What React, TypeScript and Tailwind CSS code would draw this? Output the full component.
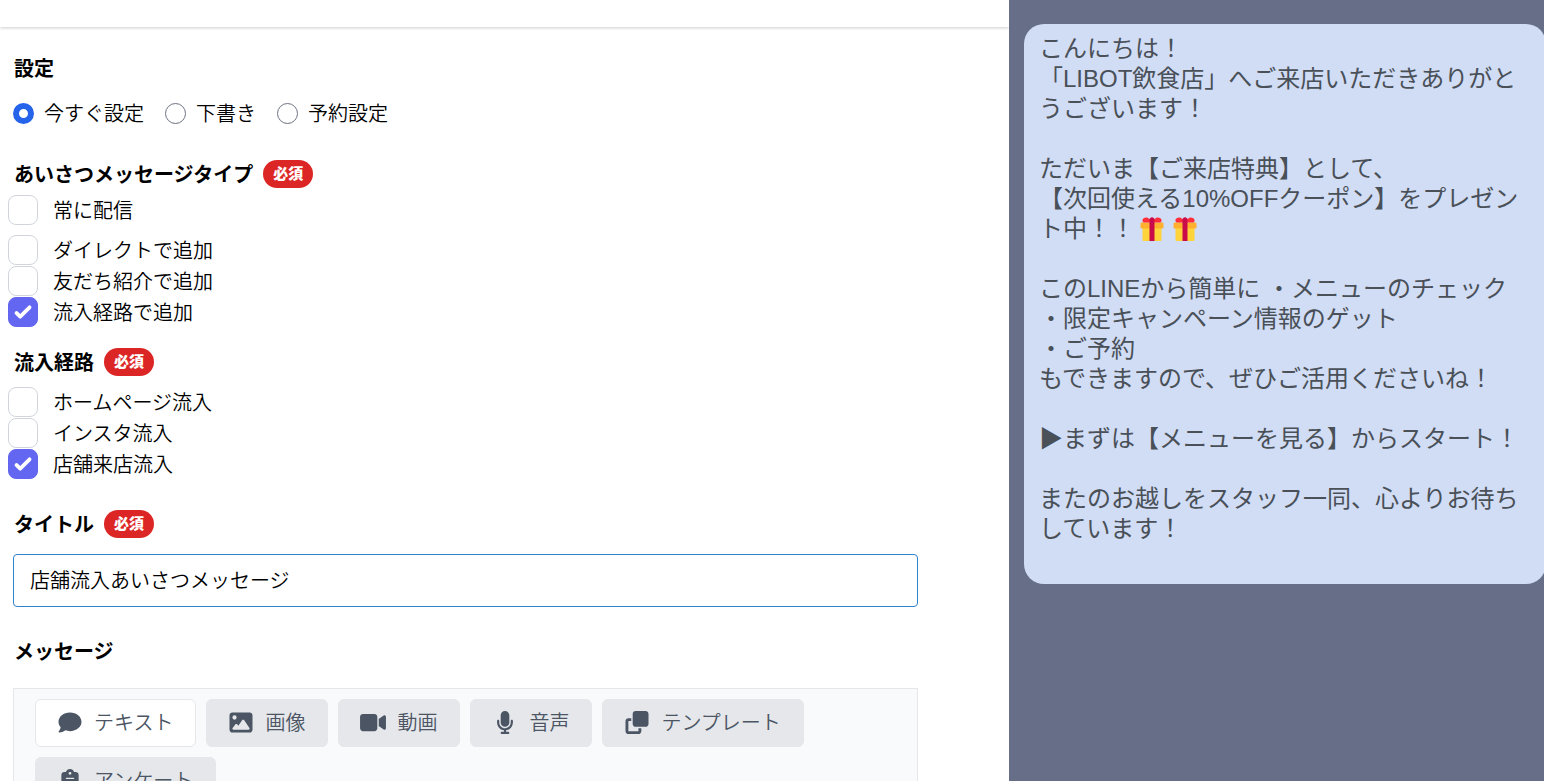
import { useState } from "react";
import type { ReactNode } from "react";
import {
  FaClipboard,
  FaClone,
  FaComment,
  FaImage,
  FaMicrophone,
  FaVideo,
} from "react-icons/fa6";

const GREETING_START = `こんにちは！
「LIBOT飲食店」へご来店いただきありがとうございます！

ただいま【ご来店特典】として、
【次回使える10%OFFクーポン】をプレゼント中！！`;

const GREETING_END = `

このLINEから簡単に ・メニューのチェック
・限定キャンペーン情報のゲット
・ご予約
もできますので、ぜひご活用くださいね！

▶まずは【メニューを見る】からスタート！

またのお越しをスタッフ一同、心よりお待ちしています！
`;

const TABS = [
  { label: "テキスト", Icon: FaComment },
  { label: "画像", Icon: FaImage },
  { label: "動画", Icon: FaVideo },
  { label: "音声", Icon: FaMicrophone },
  { label: "テンプレート", Icon: FaClone },
  { label: "アンケート", Icon: FaClipboard },
];

function Gift() {
  return (
    <svg viewBox="0 0 26 26" className="ml-1 inline-block size-[26px] align-[-5px]" role="img" aria-label="プレゼント">
      <rect x="3.5" y="9" width="19" height="16" rx="1" fill="#ffd43b" />
      <rect x="1.5" y="6.5" width="23" height="6" rx="1.2" fill="#ffb02e" />
      <path d="M13 6.5H4.5C3 5.5 3 3.5 4.6 2.3 6.5 .9 9 1.2 10.5 3L13 4l2.500-1c1.500-1.800 4-2.100 5.900-.7 1.600 1.200 1.600 3.200 .1 4.200z" fill="#ff2e3a" />
      <path d="M10.500 4c0-3.600 5-3.600 5 0V25h-5z" fill="#ca0b4a" />
    </svg>
  );
}

function Required() {
  return (
    <span className="rounded-full bg-[#dc2626] px-2.5 pt-0.5 pb-1 text-[15px] leading-[22px] font-black text-white">
      必須
    </span>
  );
}

function Heading({ children, required }: { children: ReactNode; required?: boolean }) {
  return (
    <span className="flex h-7 items-center gap-2.5 pl-3.5 text-xl font-bold">
      {children}
      {required && <Required />}
    </span>
  );
}

function Radio({ label, defaultChecked }: { label: string; defaultChecked?: boolean }) {
  return (
    <label className="flex items-center gap-2.5">
      <input
        type="radio"
        name="timing"
        defaultChecked={defaultChecked}
        className="size-[21px] appearance-none rounded-full border border-[#6b7280] bg-white checked:border-[6px] checked:border-[#2563eb]"
      />
      {label}
    </label>
  );
}

function Check({ label, defaultChecked }: { label: string; defaultChecked?: boolean }) {
  return (
    <label className="flex items-center gap-[15px]">
      <span className="grid size-[30px]">
        <input
          type="checkbox"
          defaultChecked={defaultChecked}
          className="peer col-start-1 row-start-1 size-[30px] appearance-none rounded-lg border border-[#d1d5db] bg-white checked:border-[#6366f1] checked:bg-[#6366f1]"
        />
        <svg
          viewBox="0 0 16 16"
          className="pointer-events-none col-start-1 row-start-1 hidden size-[30px] fill-white peer-checked:block"
          aria-hidden="true"
        >
          <path d="M12.207 4.793a1 1 0 010 1.414l-5 5a1 1 0 01-1.414 0l-2-2a1 1 0 011.414-1.414L6.5 9.086l4.293-4.293a1 1 0 011.414 0z" />
        </svg>
      </span>
      {label}
    </label>
  );
}

export default function App() {
  const [active, setActive] = useState("テキスト");

  return (
    <div
      lang="ja"
      className="flex h-screen overflow-hidden bg-white font-['Noto_Sans_CJK_JP',sans-serif] text-xl leading-[30px] text-black"
    >
      <main className="min-w-0 flex-1 font-[350]">
        <header className="h-[27px] bg-white shadow-[0_1px_3px_rgba(0,0,0,0.2)]" />
        <form className="pt-[27px]">
          <fieldset>
            <legend>
              <Heading>設定</Heading>
            </legend>
            <div className="mt-4 flex gap-[21px] pl-[13px]">
              <Radio label="今すぐ設定" defaultChecked />
              <Radio label="下書き" />
              <Radio label="予約設定" />
            </div>
          </fieldset>

          <fieldset className="mt-8">
            <legend>
              <Heading required>あいさつメッセージタイプ</Heading>
            </legend>
            <div className="mt-[7px] flex flex-col pl-2">
              <Check label="常に配信" />
              <div className="mt-2.5 flex flex-col gap-px">
                <Check label="ダイレクトで追加" />
                <Check label="友だち紹介で追加" />
                <Check label="流入経路で追加" defaultChecked />
              </div>
            </div>
          </fieldset>

          <fieldset className="mt-[21px]">
            <legend>
              <Heading required>流入経路</Heading>
            </legend>
            <div className="mt-[11px] flex flex-col gap-px pl-2">
              <Check label="ホームページ流入" />
              <Check label="インスタ流入" />
              <Check label="店舗来店流入" defaultChecked />
            </div>
          </fieldset>

          <div className="mt-[31px]">
            <label htmlFor="title">
              <Heading required>タイトル</Heading>
            </label>
            <div className="mt-4 pr-[91px] pl-[13px]">
              <input
                id="title"
                type="text"
                defaultValue="店舗流入あいさつメッセージ"
                className="block h-[53px] w-full rounded border border-[#3182ce] px-4 pb-0.5 outline-none"
              />
            </div>
          </div>

          <section className="mt-[30px]">
            <h2>
              <Heading>メッセージ</Heading>
            </h2>
            <div className="mt-[23px] mr-[91px] ml-[13px] flex flex-wrap gap-2.5 border border-[#e5e7eb] bg-[#f9fafb] px-[21px] py-2.5">
              {TABS.map(({ label, Icon }) => (
                <button
                  key={label}
                  type="button"
                  aria-pressed={active === label}
                  onClick={() => setActive(label)}
                  className="flex h-12 items-center gap-2.5 rounded-md border border-[#e5e7eb] bg-[#e5e7eb] pr-[22px] pb-0.5 pl-5 text-[#4b5563] aria-pressed:bg-white"
                >
                  <span className="flex w-7 justify-center">
                    <Icon aria-hidden="true" className="h-[23px] w-[26px] shrink-0" />
                  </span>
                  {label}
                </button>
              ))}
            </div>
          </section>
        </form>
      </main>

      <aside className="flex w-[535px] shrink-0 items-start overflow-hidden bg-[#676e87] pt-6 pl-[15px]">
        <p className="w-[522px] shrink-0 rounded-[20px] bg-[#d1dcf5] px-[15px] py-2.5 font-['Liberation_Sans','Noto_Sans_CJK_JP',sans-serif] text-2xl leading-[30px] whitespace-break-spaces text-[#495057]">
          {GREETING_START}
          <Gift />
          <span className="pl-[3px]" />
          <Gift />
          {GREETING_END}
          <br />
        </p>
      </aside>
    </div>
  );
}
